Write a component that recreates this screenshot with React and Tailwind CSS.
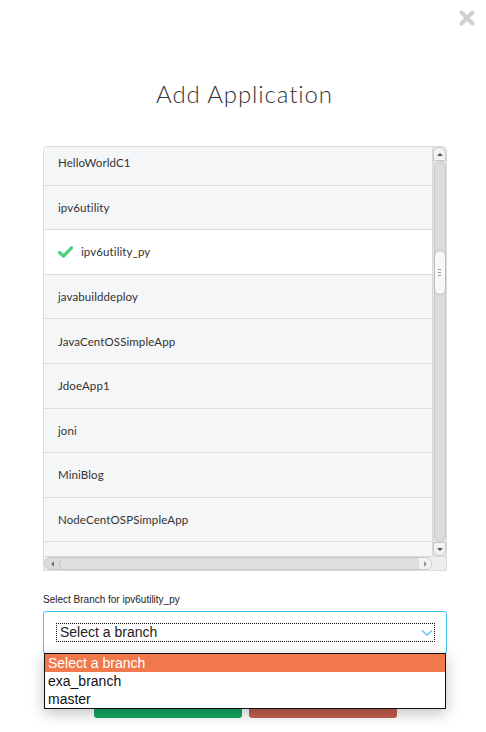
import React from 'react';

const apps = [
  'HelloWorldC1',
  'ipv6utility',
  'ipv6utility_py',
  'javabuilddeploy',
  'JavaCentOSSimpleApp',
  'JdoeApp1',
  'joni',
  'MiniBlog',
  'NodeCentOSPSimpleApp',
  '',
];

function Check() {
  return (
    <svg width="15" height="12" viewBox="0 0 15 12" className="mr-[8px] shrink-0">
      <path d="M1.5 6.5 L5.5 10.2 L13.5 1.8" fill="none" stroke="#4cd07d" strokeWidth="3.2" strokeLinecap="round" strokeLinejoin="round" />
    </svg>
  );
}

function App() {
  const selected = 'ipv6utility_py';

  return (
    <div className="relative w-[486px] h-[732px] bg-white overflow-hidden" style={{ fontFamily: 'Lato, "Open Sans", sans-serif' }}>
      {/* close */}
      <div className="flex justify-end pt-[10px] pr-[11px]">
        <svg width="16" height="16" viewBox="0 0 16 16">
          <path d="M2.5 2.5 L13.5 13.5 M13.5 2.5 L2.5 13.5" stroke="#d0d0d0" strokeWidth="4" strokeLinecap="round" />
        </svg>
      </div>

      <h1 className="mt-[53px] text-center text-[24px] font-light text-[#333] tracking-[0.9px] leading-[30px] pl-[3px]">Add Application</h1>

      <div className="ml-[43px] w-[404px] mt-[37px]">
        {/* list box */}
        <div className="h-[425px] border border-[#dcdcdc] rounded-t-[4px] flex flex-col overflow-hidden">
          <div className="flex flex-1 min-h-0">
            <div className="flex-1 overflow-hidden">
              <div className="-mt-[6px]">
                {apps.map((a, i) => (
                  <div
                    key={i}
                    className={`h-[44.6px] flex items-center pl-[14px] border-b border-[#dedede] text-[11.5px] tracking-[0.1px] text-[#333] ${a === selected ? 'bg-white' : 'bg-[#f5f6f8]'}`}
                  >
                    {a === selected && <Check />}
                    {a}
                  </div>
                ))}
              </div>
            </div>
            {/* vertical scrollbar */}
            <div className="w-[14px] bg-[#e6e6e6] flex flex-col items-center border-l border-[#d8d8d8]">
              <div className="w-[13px] h-[14px] bg-[#f3f3f3] border border-[#c8c8c8] rounded-t-[6px] flex items-center justify-center">
                <div className="w-0 h-0 border-l-[3px] border-r-[3px] border-b-[3px] border-l-transparent border-r-transparent border-b-[#555]" />
              </div>
              <div className="flex-1 w-[12px] bg-[#dcdcdc] border border-[#c8c8c8] rounded-[6px] relative">
                <div className="absolute left-[-1px] top-[88px] w-[12px] h-[45px] bg-[#f8f8f8] border border-[#bdbdbd] rounded-[6px] flex flex-col items-center justify-center gap-[2px]">
                  <div className="w-[3px] h-px bg-[#999]" />
                  <div className="w-[3px] h-px bg-[#999]" />
                  <div className="w-[3px] h-px bg-[#999]" />
                </div>
              </div>
              <div className="w-[13px] h-[14px] bg-[#f3f3f3] border border-[#c8c8c8] rounded-b-[6px] flex items-center justify-center">
                <div className="w-0 h-0 border-l-[3px] border-r-[3px] border-t-[3px] border-l-transparent border-r-transparent border-t-[#555]" />
              </div>
            </div>
          </div>
          {/* horizontal scrollbar */}
          <div className="h-[14px] flex bg-[#eeeeee] border-t border-[#d8d8d8]">
            <div className="flex-1 flex items-center bg-[#dcdcdc] border border-[#c8c8c8] rounded-[7px]">
              <div className="w-[14px] h-full flex items-center justify-center">
                <div className="w-0 h-0 border-t-[3px] border-b-[3px] border-r-[3px] border-t-transparent border-b-transparent border-r-[#777]" />
              </div>
              <div className="flex-1 h-full bg-[#dedede] border-l border-[#c0c0c0] rounded-[7px]" />
              <div className="w-[12px] h-full bg-[#f3f3f3] flex items-center justify-center rounded-r-[7px]">
                <div className="w-0 h-0 border-t-[3px] border-b-[3px] border-l-[3px] border-t-transparent border-b-transparent border-l-[#999]" />
              </div>
            </div>
            <div className="w-[14px] bg-[#eeeeee]" />
          </div>
        </div>

        {/* branch select */}
        <div className="mt-[23px] text-[10px] text-[#222] leading-[12px]" style={{ fontFamily: '"Liberation Sans", Arial, sans-serif' }}>
          Select Branch for ipv6utility_py
        </div>
        <div className="relative mt-[5px]" style={{ fontFamily: '"Liberation Sans", Arial, sans-serif' }}>
          <div className="h-[43px] border border-[#3ec3ec] rounded-[3px] bg-white flex items-center pl-[12px] pr-[11px]">
            <div className="flex-1 h-[19px] border border-dotted border-[#111] flex items-center justify-between pl-[3px] pr-[1px]">
              <span className="text-[14px] text-[#222] leading-[17px]">Select a branch</span>
              <svg width="12" height="8" viewBox="0 0 12 8">
                <path d="M1 1.5 L6 6 L11 1.5" fill="none" stroke="#5fc6ee" strokeWidth="1.5" />
              </svg>
            </div>
          </div>

          {/* open dropdown */}
          <div className="absolute left-[1px] right-[1px] top-[42px] z-10 bg-white border border-[#111] shadow-[0_4px_14px_rgba(0,0,0,0.25)] text-[14px] leading-[18px]">
            <div className="bg-[#f0784a] text-white pl-[3px]">Select a branch</div>
            <div className="text-[#111] pl-[3px]">exa_branch</div>
            <div className="text-[#111] pl-[3px]">master</div>
          </div>
        </div>

        {/* buttons */}
        <div className="mt-[27px] flex justify-center gap-[7px]">
          <button className="w-[148px] h-[37px] bg-[#12a85f] rounded-[3px] text-white text-[13px]">Add</button>
          <button className="w-[148px] h-[37px] bg-[#c25f50] rounded-[3px] text-white text-[13px]">Cancel</button>
        </div>
      </div>
    </div>
  );
}

export default App;
